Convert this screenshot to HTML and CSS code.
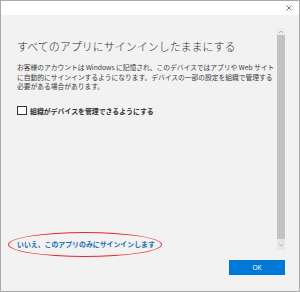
FILE: index.html
```html
<!DOCTYPE html>
<html lang="ja">
<head>
<meta charset="utf-8">
<link rel="stylesheet" href="styles.css">
</head>
<body>
<div class="window">
  <div class="titlebar">
    <svg class="close" width="6" height="6" viewBox="0 0 6 6"><path d="M0.5 0.5 L5.5 5.5 M5.5 0.5 L0.5 5.5" stroke="#777" stroke-width="1" fill="none"/></svg>
  </div>
  <div class="body">
    <div class="scrollarea">
      <div class="content">
        <h1 class="title">すべてのアプリにサインインしたままにする</h1>
        <p class="desc">
          <span class="line">お客様のアカウントは Windows に記憶され、このデバイスではアプリや Web サイト</span>
          <span class="line">に自動的にサインインするようになります。デバイスの一部の設定を組織で管理する</span>
          <span class="line">必要がある場合があります。</span>
        </p>
        <label class="check">
          <span class="box"></span>
          <span class="check-label">組織がデバイスを管理できるようにする</span>
        </label>
        <a class="link">いいえ、このアプリのみにサインインします</a>
      </div>
      <div class="scrollbar">
        <div class="arrow">
          <svg width="6" height="4" viewBox="0 0 6 4"><path d="M1 3 L3 1 L5 3" stroke="#a8a8a8" stroke-width="0.8" fill="none"/></svg>
        </div>
        <div class="thumb"></div>
        <div class="arrow down">
          <svg width="6" height="4" viewBox="0 0 6 4"><path d="M1 1 L3 3 L5 1" stroke="#a8a8a8" stroke-width="0.8" fill="none"/></svg>
        </div>
      </div>
    </div>
    <div class="footer">
      <button class="ok">OK</button>
    </div>
  </div>
  <div class="annotation"></div>
</div>
</body>
</html>
```
FILE: styles.css
```css
* { box-sizing: border-box; }
html, body { margin: 0; padding: 0; background: #ffffff; }
body { font-family: "Noto Sans CJK JP", "Noto Sans", sans-serif; }

.window {
  position: relative;
  width: 300px;
  height: 292px;
  border: 1px solid #a9a9a9;
  display: flex;
  flex-direction: column;
  background: #f2f2f2;
}

.titlebar {
  height: 14px;
  background: #ffffff;
  display: flex;
  justify-content: flex-end;
  align-items: center;
  padding-right: 7px;
}
.close { display: block; }

.body {
  flex: 1;
  display: flex;
  flex-direction: column;
  padding: 13px 14px 15px 16px;
}

.scrollarea {
  height: 222px;
  display: flex;
}

.content {
  flex: 1;
  min-width: 0;
  display: flex;
  flex-direction: column;
  padding-top: 10px;
  padding-bottom: 1px;
}

.title {
  margin: 0;
  font-size: 11px;
  line-height: 16px;
  font-weight: 300;
  color: #2b2b2b;
  white-space: nowrap;
}

.desc {
  margin: 9px 0 0;
  font-size: 6.8px;
  line-height: 9.6px;
  letter-spacing: -0.05px;
  color: #3c3c3c;
}
.line { display: block; white-space: nowrap; }

.check {
  margin-top: 14px;
  display: flex;
  align-items: center;
  gap: 3px;
  height: 10px;
}
.box {
  width: 10px;
  height: 9px;
  border: 1.3px solid #333;
  background: #fff;
}
.check-label {
  font-size: 6.9px;
  font-weight: 700;
  color: #333;
  white-space: nowrap;
}

.link {
  margin-top: auto;
  font-size: 6.9px;
  line-height: 10px;
  font-weight: 700;
  color: #1a6fc0;
  white-space: nowrap;
}

.scrollbar {
  width: 8px;
  display: flex;
  flex-direction: column;
}
.arrow {
  height: 7px;
  display: flex;
  align-items: center;
  justify-content: center;
  background: #ececec;
}
.arrow.down { height: 11px; background: #e6e6e6; }
.thumb {
  flex: 1;
  background: #c3c3c3;
}

.footer {
  margin-top: 10px;
  display: flex;
  justify-content: flex-end;
}
.ok {
  width: 56px;
  height: 15px;
  border: none;
  padding: 0;
  background: #0078d7;
  color: #ffffff;
  font-family: "Noto Sans", sans-serif;
  font-size: 6.5px;
}

.annotation {
  position: absolute;
  left: 7px;
  top: 231px;
  width: 154px;
  height: 25px;
  border: 1.5px solid #e8262b;
  border-radius: 50%;
}
```
